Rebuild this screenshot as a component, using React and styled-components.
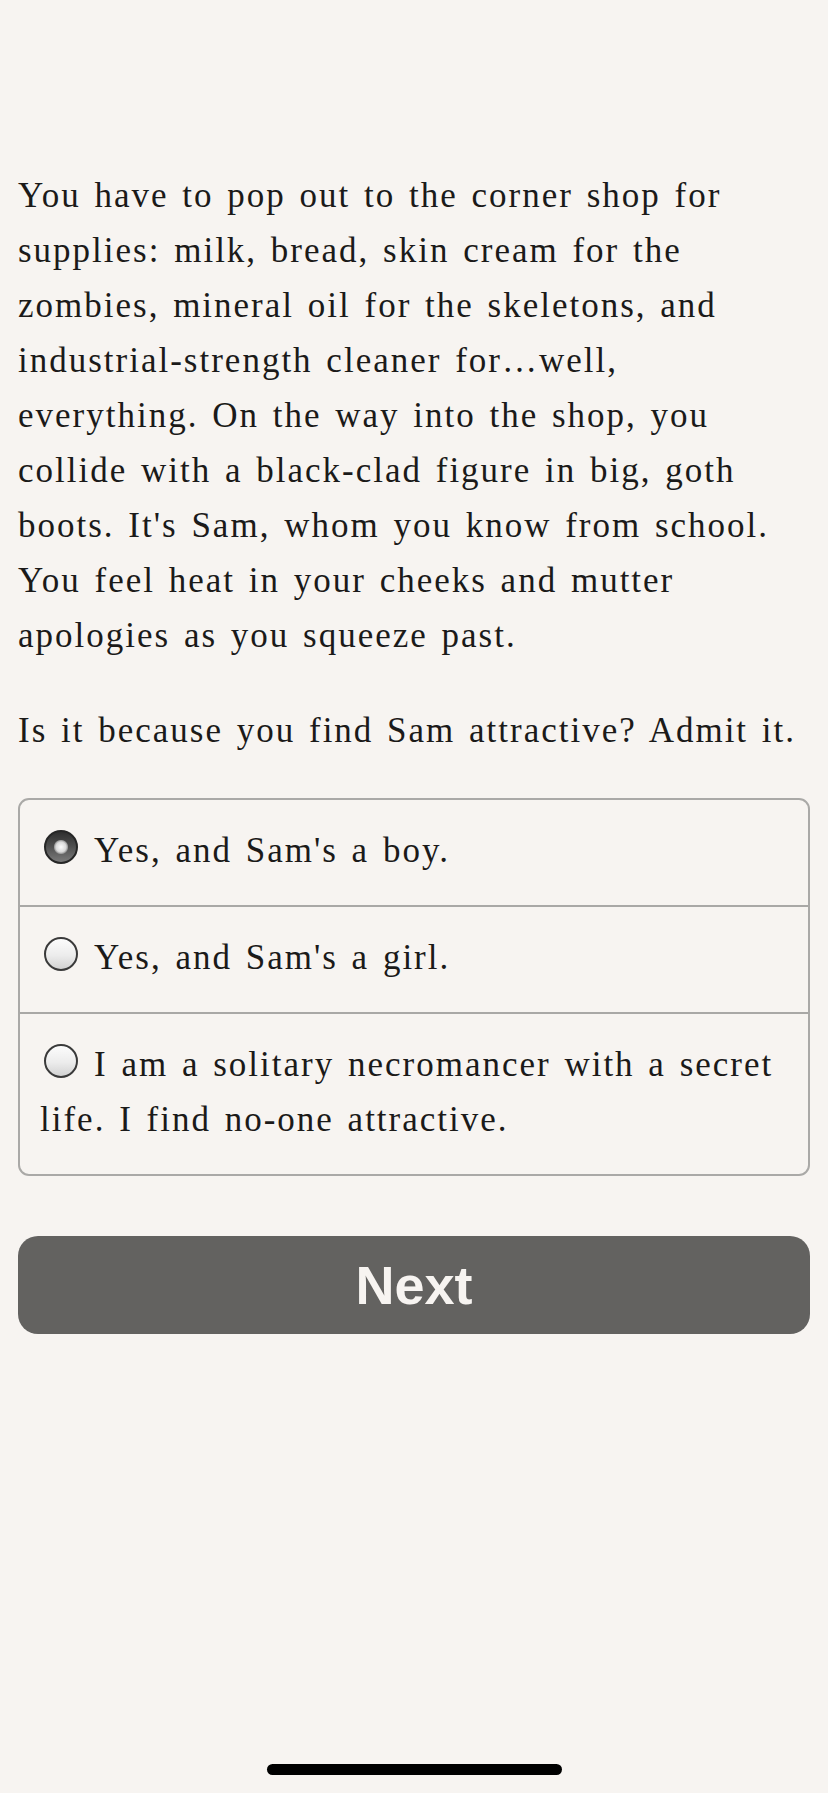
import styled, { createGlobalStyle } from "styled-components";
import { useState } from "react";

const GlobalStyle = createGlobalStyle`
  html, body {
    margin: 0;
    padding: 0;
    background: #f7f4f1;
  }
  * {
    box-sizing: border-box;
  }
`;

const options = [
  "Yes, and Sam's a boy.",
  "Yes, and Sam's a girl.",
  "I am a solitary necromancer with a secret life. I find no-one attractive.",
];

const App = () => {
  const [picked, setPicked] = useState(0);

  return (
    <Page>
      <GlobalStyle />
      <Story>
        You have to pop out to the corner shop for supplies: milk, bread, skin
        cream for the zombies, mineral oil for the skeletons, and
        industrial-strength cleaner for…well, everything. On the way into the
        shop, you collide with a black-clad figure in big, goth boots. It's
        Sam, whom you know from school. You feel heat in your cheeks and mutter
        apologies as you squeeze past.
      </Story>
      <Story>Is it because you find Sam attractive? Admit it.</Story>

      <Choices>
        {options.map((text, i) => (
          <Choice key={i} onClick={() => setPicked(i)}>
            <Radio $checked={picked === i} />
            {text}
          </Choice>
        ))}
      </Choices>

      <NextButton type="button">Next</NextButton>
      <HomeBar />
    </Page>
  );
};

const Page = styled.div`
  position: relative;
  min-height: 1793px;
  padding: 168px 18px 0;
  color: #1b1a19;
  font-family: "Liberation Serif", "Times New Roman", serif;
  font-size: 35px;
  line-height: 55px;
  letter-spacing: 2px;
  word-spacing: 3px;
`;

const Story = styled.p`
  margin: 0 0 40px;
`;

const Choices = styled.div`
  border: 2px solid #aaa9a7;
  border-radius: 11px;
  overflow: hidden;
`;

const Choice = styled.div`
  padding: 23px 20px 27px 20px;
  cursor: pointer;
  & + & {
    border-top: 2px solid #a9a8a6;
  }
`;

const Radio = styled.span`
  display: inline-block;
  width: 34px;
  height: 34px;
  margin: 0 16px 0 4px;
  vertical-align: -2px;
  border-radius: 50%;
  border: 2px solid ${(p) => (p.$checked ? "#262626" : "#3a3a3a")};
  background: ${(p) =>
    p.$checked
      ? "radial-gradient(circle at 50% 50%, #fbfbfb 0, #d8d8d8 5px, #a0a0a0 6.5px, transparent 7.5px), linear-gradient(#2f2f2f, #4d4d4d 45%, #7a7a7a)"
      : "linear-gradient(#fcfcfc, #ececec 55%, #d2d2d2)"};
`;

const NextButton = styled.button`
  display: block;
  width: 100%;
  height: 98px;
  margin-top: 60px;
  border: none;
  border-radius: 20px;
  background: #636260;
  color: #f7f4f1;
  font-family: "Liberation Sans", Arial, sans-serif;
  font-weight: 700;
  font-size: 54px;
  letter-spacing: 0;
  word-spacing: 0;
  cursor: pointer;
`;

const HomeBar = styled.div`
  position: absolute;
  left: 50%;
  bottom: 18px;
  width: 295px;
  height: 11px;
  margin-left: -147px;
  border-radius: 6px;
  background: #000;
`;

export default App;
